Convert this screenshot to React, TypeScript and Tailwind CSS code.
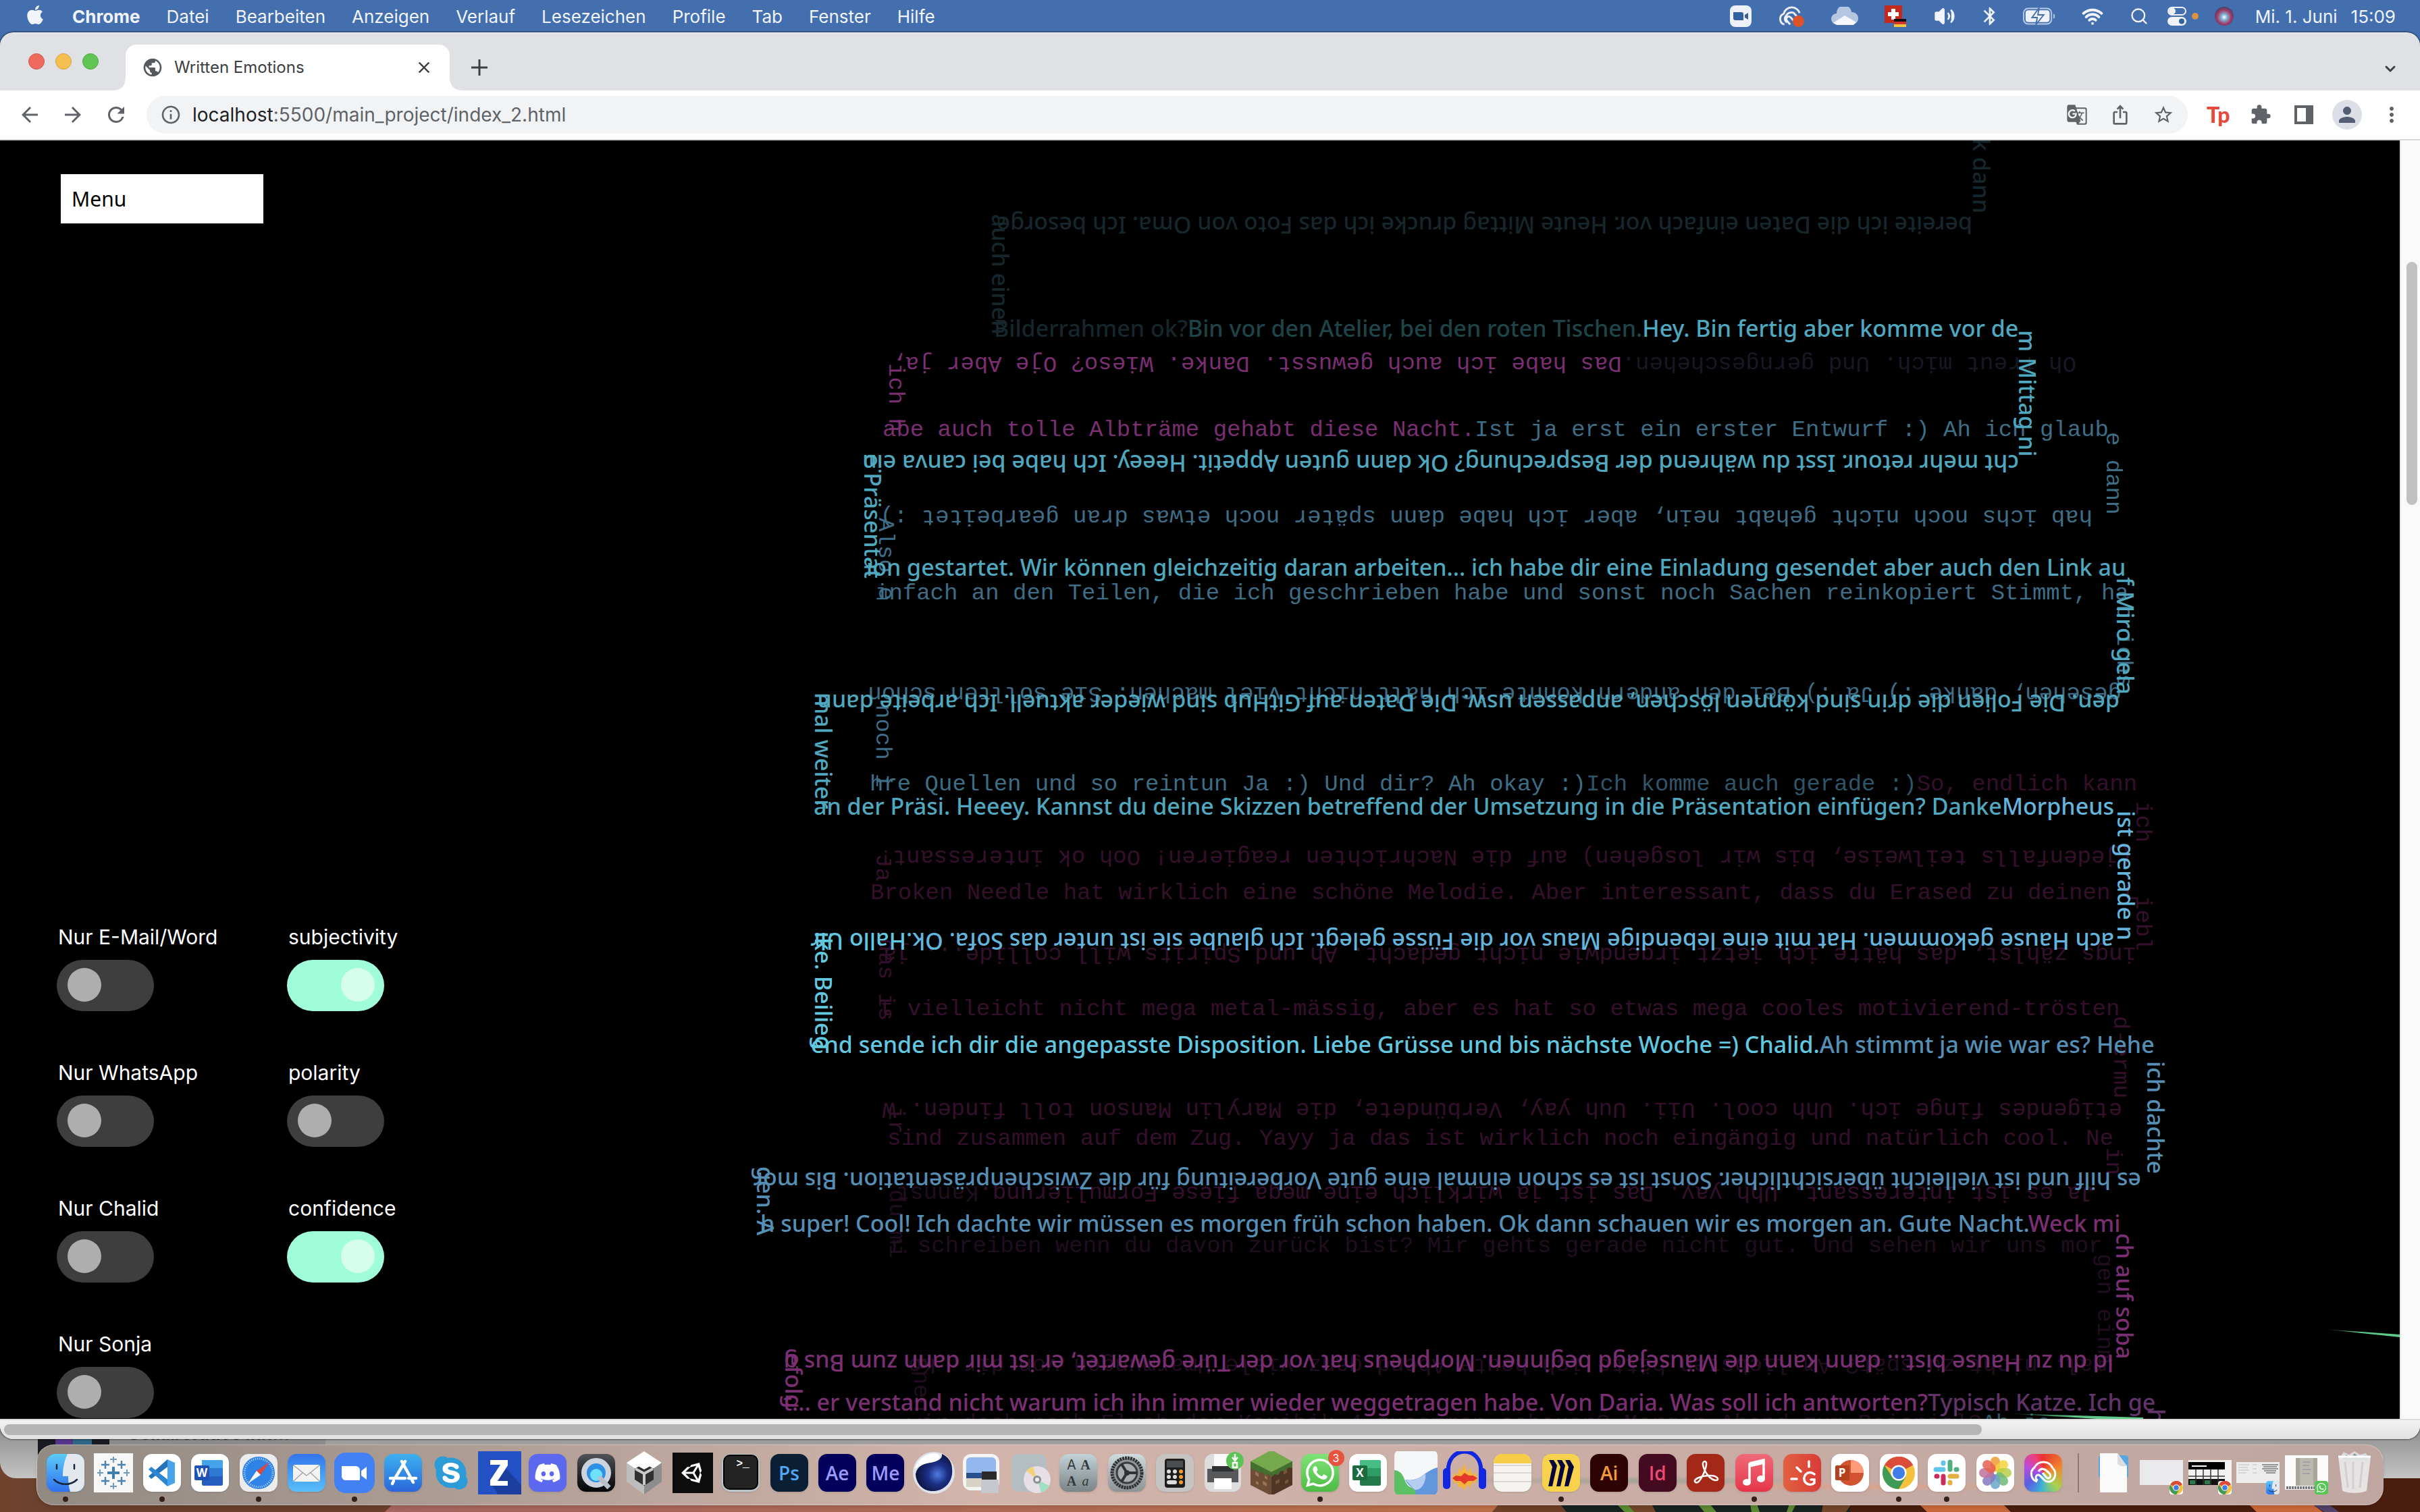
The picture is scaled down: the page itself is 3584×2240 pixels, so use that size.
import React from "react";
import { FaApple, FaDiscord, FaSkype, FaUnity, FaWhatsapp } from "react-icons/fa";
import {
  MdArrowBack,
  MdArrowForward,
  MdBluetooth,
  MdClose,
  MdExtension,
  MdGTranslate,
  MdInfoOutline,
  MdIosShare,
  MdMoreVert,
  MdOutlineRefresh,
  MdPerson,
  MdPublic,
  MdStarBorder,
} from "react-icons/md";
import { ChevronDown, Search, Volume2, Wifi } from "lucide-react";

/* ------------------------------------------------------------------ */
/* Menu bar                                                            */
/* ------------------------------------------------------------------ */

const MENUS = ["Datei", "Bearbeiten", "Anzeigen", "Verlauf", "Lesezeichen", "Profile", "Tab", "Fenster", "Hilfe"];

function MenuBar() {
  return (
    <header className="flex h-12 shrink-0 items-center justify-between bg-[#436fae] pr-9 pl-9 text-[26px] text-[#f1f4fa]">
      <nav className="flex items-center gap-[39px]">
        <button aria-label="Apple" className="pb-1">
          <FaApple className="size-8" />
        </button>
        <button className="font-bold">Chrome</button>
        {MENUS.map((m) => (
          <button key={m}>{m}</button>
        ))}
      </nav>
      <div className="flex items-center">
        <div className="flex items-center gap-[39px]">
          <svg viewBox="0 0 32 32" className="size-8">
            <rect width="32" height="32" rx="8" fill="#eef2f8" />
            <path d="M5 10h12a3 3 0 0 1 3 3v9H8a3 3 0 0 1-3-3zM22 14l5-3v10l-5-3z" fill="#33619f" />
          </svg>
          <svg viewBox="0 0 40 34" className="h-8 w-10">
            <path d="M9 30a9 9 0 0 1-1-17 13 13 0 0 1 25-1M13 27a7 7 0 0 1-1-11 9 9 0 0 1 12-4l5 6M18 30l-5-6c-3-4 2-9 6-5l7 8" fill="none" stroke="#eef2f8" strokeWidth="3" />
            <circle cx="31" cy="25" r="9" fill="#dd5228" />
          </svg>
          <svg viewBox="0 0 40 28" className="h-7 w-10">
            <path d="M8 26a8 8 0 0 1 0-16A11 11 0 0 1 30 8a9 9 0 0 1 2 18z" fill="#b5c6e0" />
            <path d="M3 24l17-11 17 10-4 4H8z" fill="#f4f7fb" />
          </svg>
          <svg viewBox="0 0 32 32" className="size-8">
            <rect width="26" height="26" fill="#c5281c" />
            <path d="M10 5h6v5h5v6h-5v5h-6v-5H5v-6h5z" fill="#fff" />
            <path d="M14 20h18v4H14z" fill="#111" />
            <path d="M14 24h18v4H14z" fill="#d0342c" />
            <path d="M14 28h18v4H14z" fill="#f3c53c" />
          </svg>
          <Volume2 className="h-8 w-9 fill-current" strokeWidth={2} />
          <MdBluetooth className="-mx-1.5 size-8" />
          <svg viewBox="0 0 50 26" className="h-7 w-12">
            <rect x="1" y="1" width="43" height="24" rx="7" fill="none" stroke="#b9cae4" strokeWidth="2" />
            <rect x="4" y="4" width="37" height="18" rx="4" fill="#eef2f8" />
            <path d="M25 0L14 15h8l-2 11 12-15h-9z" fill="#eef2f8" stroke="#436fae" strokeWidth="2" />
            <path d="M47 9v8c3-1 3-7 0-8z" fill="#b9cae4" />
          </svg>
          <Wifi className="size-8" strokeWidth={3} />
          <Search className="size-7" strokeWidth={2} />
        </div>
        <svg viewBox="0 0 28 28" className="ml-7 size-7">
          <rect x="1" y="1" width="26" height="11" rx="5.500" fill="none" stroke="#eef2f8" strokeWidth="2" />
          <circle cx="7" cy="6.500" r="5" fill="#eef2f8" />
          <rect y="15" width="28" height="13" rx="6.500" fill="#eef2f8" />
          <circle cx="21" cy="21.500" r="4" fill="#33619f" />
        </svg>
        <span className="ml-2 size-2.5 rounded-full bg-[#dc9140]" />
        <span className="ml-6 size-7 rounded-full bg-[radial-gradient(circle_at_50%_55%,#ffffff_0%,#7fb8d8_20%,#a03a68_50%,#35426b_80%)]" />
        <time className="ml-8 flex gap-5 whitespace-nowrap">
          <span>Mi. 1. Juni</span>
          <span>15:09</span>
        </time>
      </div>
    </header>
  );
}

/* ------------------------------------------------------------------ */
/* Browser chrome                                                      */
/* ------------------------------------------------------------------ */

function TabStrip() {
  return (
    <div className="flex h-[85px] shrink-0 items-end bg-[#dfe1e5]">
      <div className="flex h-full w-[186px] items-center gap-4 pb-0.5 pl-[42px]">
        <button aria-label="Schliessen" className="size-6 rounded-full border border-[#d75549] bg-[#ee6a5e]" />
        <button aria-label="Minimieren" className="size-6 rounded-full border border-[#d9a33c] bg-[#f5bf4f]" />
        <button aria-label="Vollbild" className="size-6 rounded-full border border-[#50a73f] bg-[#61c554]" />
      </div>
      <div className="relative flex h-17 w-[480px] items-center rounded-t-2xl bg-white px-6">
        <span className="absolute bottom-0 -left-4 size-4 bg-[radial-gradient(circle_at_0_0,#dfe1e5_15px,#ffffff_16px)]" />
        <span className="absolute -right-4 bottom-0 size-4 bg-[radial-gradient(circle_at_100%_0,#dfe1e5_15px,#ffffff_16px)]" />
        <MdPublic className="size-8 text-[#55585d]" />
        <span className="ml-4 flex-1 text-2xl text-[#3c4043]">Written Emotions</span>
        <button aria-label="Tab schliessen">
          <MdClose className="size-7 text-[#3c4043]" />
        </button>
      </div>
      <button aria-label="Neuer Tab" className="mb-5 ml-[30px] flex size-7 items-center justify-center">
        <svg viewBox="0 0 24 24" className="size-6">
          <path d="M12 0v24M0 12h24" stroke="#3c4043" strokeWidth="3" />
        </svg>
      </button>
      <button aria-label="Tabs durchsuchen" className="mr-8 mb-5 ml-auto">
        <ChevronDown className="size-6 text-[#3c4043]" strokeWidth={3} />
      </button>
    </div>
  );
}

function Toolbar() {
  return (
    <div className="flex h-[74px] shrink-0 items-center border-b-2 border-[#d5d7da] bg-white text-[#5f6368]">
      <div className="flex w-[217px] items-center gap-7 pl-[26px]">
        <button aria-label="Zurück"><MdArrowBack className="size-9" /></button>
        <button aria-label="Vorwärts"><MdArrowForward className="size-9" /></button>
        <button aria-label="Neu laden"><MdOutlineRefresh className="size-9" /></button>
      </div>
      <div className="flex h-14 flex-1 items-center rounded-full bg-[#f1f3f4] pr-5 pl-5">
        <MdInfoOutline className="size-8" />
        <div className="ml-4 flex-1 text-[28px]">
          <span className="text-[#202124]">localhost</span>:5500/main_project/index_2.html
        </div>
        <div className="flex items-center gap-8">
          <button aria-label="Übersetzen"><MdGTranslate className="size-8" /></button>
          <button aria-label="Teilen"><MdIosShare className="size-8" /></button>
          <button aria-label="Lesezeichen"><MdStarBorder className="size-8" /></button>
        </div>
      </div>
      <div className="flex items-center gap-8 pr-6 pl-7">
        <button className="w-8 font-[Lato] text-[32px] leading-8 font-black text-[#e4493b]">Tp</button>
        <button aria-label="Erweiterungen"><MdExtension className="size-8" /></button>
        <button aria-label="Seitenleiste">
          <svg viewBox="0 0 32 32" className="size-8"><path fillRule="evenodd" d="M2 2h28v28H2zM6 6v20h13V6z" fill="#5f6368" /></svg>
        </button>
        <button aria-label="Profil" className="-mx-1.5 flex size-11 items-center justify-center rounded-full bg-[#dcdfe5]">
          <MdPerson className="size-9 text-[#535d73]" />
        </button>
        <button aria-label="Mehr"><MdMoreVert className="size-9" /></button>
      </div>
    </div>
  );
}

/* ------------------------------------------------------------------ */
/* Text spirals                                                        */
/* ------------------------------------------------------------------ */

type Dir = "h" | "u" | "v";
type Part = [color: string, text: string];
/** x and y give the point where the baseline of the run starts. */
interface Run {
  d: Dir;
  x: number;
  y: number;
  t: Part[];
}

const AQUA = "#4fa8bf";
const DEEP = "#15262c";
const SKY = "#64b5de";
const BRIGHT = "#62c8e0";
const STEEL = "#558fb5";
const PLUM = "#7b2f73";
const SLATE = "#3f6d86";
const WINE = "#35102c";
const DUSK = "#200e20";

const SANS_RUNS: Run[] = [
  { d: "v", x: 2922, y: -3, t: [[DEEP, "k dann"]] },
  { d: "u", x: 2921, y: 113, t: [[DEEP, "bereite ich die Daten einfach vor. Heute Mittag drucke ich das Foto von Oma. Ich besorge"]] },
  { d: "v", x: 1469, y: 109, t: [[DEEP, "auch einen"]] },
  { d: "h", x: 1472, y: 291, t: [[DEEP, "Bilderrahmen ok?"], ["#1f4448", "Bin vor den Atelier, bei den roten Tischen."], [AQUA, "Hey. Bin fertig aber komme vor de"]] },
  { d: "v", x: 2990, y: 281, t: [[AQUA, "m Mittag ni"]] },
  { d: "u", x: 2990, y: 466, t: [[AQUA, "cht mehr retour. Isst du während der Besprechung? Ok dann guten Appetit. Heeey. Ich habe bei canva ein"]] },
  { d: "v", x: 1280, y: 464, t: [[AQUA, "e Präsentat"]] },
  { d: "h", x: 1283, y: 645, t: [[AQUA, "ion gestartet. Wir können gleichzeitig daran arbeiten... ich habe dir eine Einladung gesendet aber auch den Link au"]] },
  { d: "v", x: 3135, y: 647, t: [[AQUA, "f Miro gela"]] },
  { d: "u", x: 3139, y: 821, t: [[AQUA, "den. Die Folien die drin sind können löschen, anpassen usw. Die Daten auf GitHub sind wieder aktuell. Ich arbeite dann"]] },
  { d: "v", x: 1207, y: 818, t: [[AQUA, "mal weiter"]] },
  { d: "h", x: 1205, y: 999, t: [[AQUA, "an der Präsi. Heeey. Kannst du deine Skizzen betreffend der Umsetzung in die Präsentation einfügen? Danke"], [SKY, "Morpheus"]] },
  { d: "v", x: 3136, y: 993, t: [[SKY, "ist gerade n"]] },
  { d: "u", x: 3131, y: 1174, t: [[SKY, "ach Hause gekommen. Hat mit eine lebendige Maus vor die Füsse gelegt. Ich glaube sie ist unter das Sofa. Ok."], [BRIGHT, "Hallo Ulr"]] },
  { d: "v", x: 1207, y: 1172, t: [[BRIGHT, "ike. Beilieg"]] },
  { d: "h", x: 1201, y: 1352, t: [[BRIGHT, "end sende ich dir die angepasste Disposition. Liebe Grüsse und bis nächste Woche =) Chalid."], [STEEL, "Ah stimmt ja wie war es? Hehe"]] },
  { d: "v", x: 3180, y: 1364, t: [[STEEL, "ich dachte"]] },
  { d: "u", x: 3171, y: 1529, t: [[STEEL, "es hilf und ist vielleicht übersichtlicher. Sonst ist es schon einmal eine gute Vorbereitung für die Zwischenpräsentation. Bis mor"]] },
  { d: "v", x: 1121, y: 1520, t: [[STEEL, "gen. A"]] },
  { d: "h", x: 1126, y: 1617, t: [[STEEL, "h super! Cool! Ich dachte wir müssen es morgen früh schon haben. Ok dann schauen wir es morgen an. Gute Nacht."], [PLUM, "Weck mi"]] },
  { d: "v", x: 3134, y: 1619, t: [[PLUM, "ch auf soba"]] },
  { d: "u", x: 3130, y: 1799, t: [[PLUM, "ld du zu Hause bist... dann kann die Mäusejagd beginnen. Morpheus hat vor der Türe gewartet, er ist mir dann zum Bus g"]] },
  { d: "v", x: 1163, y: 1796, t: [[PLUM, "efolg"]] },
  { d: "h", x: 1160, y: 1882, t: [[PLUM, "t... er verstand nicht warum ich ihn immer wieder weggetragen habe. Von Daria. Was soll ich antworten?"], ["#603468", "Typisch Katze. Ich ge"]] },
  { d: "v", x: 3181, y: 1879, t: [["#603468", "h"]] },
];

const MONO_RUNS: Run[] = [
  { d: "u", x: 3075, y: 321, t: [["#181825", "Oh freut mich. Und gerngeschehen."], [PLUM, "Das habe ich auch gewusst. Danke. Wieso? Oje Aber ja,"]] },
  { d: "v", x: 1317, y: 330, t: [[PLUM, "ich h"]] },
  { d: "h", x: 1307, y: 438, t: [[PLUM, "abe auch tolle Albträme gehabt diese Nacht."], [SLATE, "Ist ja erst ein erster Entwurf :) Ah ich glaub"]] },
  { d: "v", x: 3120, y: 432, t: [[SLATE, "e dann"]] },
  { d: "u", x: 3099, y: 548, t: [[SLATE, "hab ichs noch nicht gehabt nein, aber ich habe dann später noch etwas dran gearbeitet :)"]] },
  { d: "v", x: 1302, y: 559, t: [[SLATE, "Also e"]] },
  { d: "h", x: 1296, y: 680, t: [[SLATE, "infach an den Teilen, die ich geschrieben habe und sonst noch Sachen reinkopiert Stimmt, ha"]] },
  { d: "v", x: 3136, y: 688, t: [[SLATE, "b ichs"]] },
  { d: "u", x: 3142, y: 810, t: [[SLATE, "gesehen, danke :) Ja :) Bei den andern könnte ich halt nicht viel machen. Sie sollten schon"]] },
  { d: "v", x: 1298, y: 836, t: [[SLATE, "noch i"]] },
  { d: "h", x: 1288, y: 963, t: [[SLATE, "hre Quellen und so reintun Ja :) Und dir? Ah okay :)"], ["#305468", "Ich komme auch gerade :)"], [WINE, "So, endlich kann"]] },
  { d: "v", x: 3164, y: 979, t: [[WINE, "ich"]] },
  { d: "u", x: 3158, y: 1052, t: [[WINE, "(jedenfalls teilweise, bis wir losgehen) auf die Nachrichten reagieren! Ooh ok interessant!"]] },
  { d: "v", x: 1298, y: 1057, t: [[WINE, "Ja"]] },
  { d: "h", x: 1289, y: 1124, t: [[WINE, "Broken Needle hat wirklich eine schöne Melodie. Aber interessant, dass du Erased zu deinen L"]] },
  { d: "v", x: 3164, y: 1119, t: [[WINE, "iebl"]] },
  { d: "u", x: 3164, y: 1196, t: [[WINE, "ings zählst, das hätte ich jetzt irgendwie nicht gedacht. Ah und Spirits will collide... ja"]] },
  { d: "v", x: 1302, y: 1182, t: [[WINE, "das is"]] },
  { d: "h", x: 1303, y: 1296, t: [[WINE, "t vielleicht nicht mega metal-mässig, aber es hat so etwas mega cooles motivierend-trösten"]] },
  { d: "v", x: 3131, y: 1297, t: [[WINE, "d-ermu"]] },
  { d: "u", x: 3143, y: 1426, t: [[WINE, "etigendes finge ich. Uhh cool. Uii. Uuh yay, Verbündete, die Marylin Manson toll finden. W"]] },
  { d: "v", x: 1317, y: 1431, t: [[WINE, "ir"]] },
  { d: "h", x: 1314, y: 1488, t: [[WINE, "sind zusammen auf dem Zug. Yayy ja das ist wirklich noch eingängig und natürlich cool. Ne"]] },
  { d: "v", x: 3120, y: 1492, t: [[WINE, "in"]] },
  { d: "u", x: 3102, y: 1550, t: [[WINE, "Ja es ist interessant. Uhh yay. Das ist ja wirklich eine mega fiese Formulierung."], [DUSK, "Kannst"]] },
  { d: "v", x: 1318, y: 1554, t: [[DUSK, "du mi"]] },
  { d: "h", x: 1318, y: 1647, t: [[DUSK, "r schreiben wenn du davon zurück bist? Mir gehts gerade nicht gut. Und sehen wir uns mor"]] },
  { d: "v", x: 3107, y: 1649, t: [[DUSK, "gen einm"]] },
  { d: "u", x: 3120, y: 1805, t: [[DUSK, "mal, nicht zu spät? Am liebsten hätte ich heute Abend ganz viele Umarmungen von dir. Kö"]] },
  { d: "v", x: 1354, y: 1802, t: [[DUSK, "nnen"]] },
  { d: "h", x: 1344, y: 1910, t: [[DUSK, "wir doch noch Fluch der Karibik 4 zusammen schauen? Morgen Abend zum Beispiel?"], ["#2b5560", "Ah ja"]] },
];

const TURN: Record<Dir, string> = { h: "rotate-0", u: "rotate-180", v: "rotate-90" };

function place({ d, x, y }: Run, ascent: number) {
  if (d === "h") return { left: x, top: y - ascent };
  if (d === "u") return { left: x, top: y + ascent };
  return { left: x + ascent, top: y };
}

function Spiral({ runs, ascent, className }: { runs: Run[]; ascent: number; className: string }) {
  return (
    <div className={`absolute inset-0 ${className}`}>
      {runs.map((run, i) => (
        <p key={i} className={`absolute origin-top-left leading-10 whitespace-pre ${TURN[run.d]}`} style={place(run, ascent)}>
          {run.t.map(([color, text]) => (
            <span key={text} style={{ color }}>{text}</span>
          ))}
        </p>
      ))}
    </div>
  );
}

/* ------------------------------------------------------------------ */
/* Page                                                                */
/* ------------------------------------------------------------------ */

function Toggle({ label, on = false }: { label: string; on?: boolean }) {
  return (
    <label className="flex h-[201px] flex-col text-[30px] leading-9 text-white">
      <span className="mb-4 pl-0.5">{label}</span>
      <span className="relative h-19 w-36">
        <input type="checkbox" role="switch" defaultChecked={on} className="peer size-full appearance-none rounded-full bg-[#3e3e3e] checked:bg-[#a0fdd9]" />
        <span className="pointer-events-none absolute top-3 left-4 size-[50px] rounded-full bg-[#aeaeae] peer-checked:left-20 peer-checked:bg-[#d6fdee]" />
      </span>
    </label>
  );
}

function Page() {
  return (
    <main className="relative flex flex-1 flex-col justify-between overflow-hidden bg-black">
      <Spiral runs={MONO_RUNS} ascent={29} className="font-['Liberation_Mono',monospace] text-[34px]" />
      <Spiral runs={SANS_RUNS} ascent={33} className="font-['Noto_Sans',sans-serif] text-[34px] font-medium" />
      <svg viewBox="0 0 600 140" className="absolute right-0 bottom-0 h-35 w-150">
        <defs>
          <linearGradient id="ray"><stop offset="0" stopColor="#5fc98a" stopOpacity="0" /><stop offset="0.5" stopColor="#5fc98a" /></linearGradient>
        </defs>
        <path d="M486 7L600 15V19z" fill="url(#ray)" />
        <path d="M16 132L220 138V144z" fill="url(#ray)" />
      </svg>
      <button className="relative mt-[50px] ml-[90px] h-[73px] w-75 bg-white pl-4 text-left font-['Noto_Sans',sans-serif] text-[30px] text-black">
        Menu
      </button>
      <div className="relative -mb-[72px] ml-21 grid grid-cols-[341px_auto] justify-start">
        <div>
          <Toggle label="Nur E-Mail/Word" />
          <Toggle label="Nur WhatsApp" />
          <Toggle label="Nur Chalid" />
          <Toggle label="Nur Sonja" />
        </div>
        <div>
          <Toggle label="subjectivity" on />
          <Toggle label="polarity" />
          <Toggle label="confidence" on />
        </div>
      </div>
    </main>
  );
}

function Browser() {
  return (
    <section className="relative z-10 flex min-h-0 flex-1 flex-col overflow-hidden rounded-[20px] border-t border-white/70 bg-[#efefef] shadow-[0_0_3px_#000]">
      <TabStrip />
      <Toolbar />
      <div className="flex min-h-0 flex-1">
        <Page />
        <div className="w-[30px] shrink-0 border-l-2 border-[#e6e6e6] bg-[#fafafa] px-2 pt-[180px]">
          <div className="h-[360px] w-4 rounded-full bg-[#c1c1c1]" />
        </div>
      </div>
      <div className="h-[30px] shrink-0 border-t-2 border-[#dcdcdc] bg-linear-to-b from-[#f2f2f2] to-[#e0e0e0] px-1.5 pt-1.5">
        <div className="h-4 w-[82%] rounded-full bg-[#b4b4b4]" />
      </div>
    </section>
  );
}

/* ------------------------------------------------------------------ */
/* Dock                                                                */
/* ------------------------------------------------------------------ */

function Art({ children }: { children: React.ReactNode }) {
  return <svg viewBox="0 0 64 64" className="size-16">{children}</svg>;
}

function Tile({ bg, children }: { bg: string; children?: React.ReactNode }) {
  return <span className={`flex size-14 items-center justify-center overflow-hidden rounded-[13px] shadow-sm ${bg}`}>{children}</span>;
}

function ChromeLogo() {
  return (
    <svg viewBox="0 0 50 50" className="size-full">
      <circle cx="25" cy="25" r="25" fill="#f5c13c" />
      <path d="M25 25L3 13A25 25 0 0 1 47 13z" fill="#dd4b3b" />
      <path d="M3 13A25 25 0 0 0 25 50l11-19-22-1z" fill="#3f9a55" />
      <path d="M25 13H47A25 25 0 0 0 25 0z" fill="#dd4b3b" />
      <circle cx="25" cy="25" r="12" fill="#fff" />
      <circle cx="25" cy="25" r="9.500" fill="#3f7de8" />
    </svg>
  );
}

function FinderFace() {
  return (
    <svg viewBox="0 0 56 56" className="size-full">
      <defs><linearGradient id="fin" x2="0" y2="1"><stop stopColor="#5ccbf8" /><stop offset="1" stopColor="#3070ee" /></linearGradient></defs>
      <path d="M0 0h56v56H0z" fill="url(#fin)" />
      <path d="M31 0c-5 10-7 22-7 33h8c0 9 1 17 3 23h21V0z" fill="#e3e8ef" />
      <path d="M15 16v6M41 16v6M11 38c9 9 25 9 34 0" stroke="#16263d" strokeWidth="2.500" fill="none" strokeLinecap="round" />
    </svg>
  );
}

interface App {
  name: string;
  icon: React.ReactNode;
  running?: boolean;
}

const adobe = (bg: string, fg: string, text: string) => (
  <Tile bg={bg}><span className={`font-['Open_Sans',sans-serif] text-[28px] font-semibold ${fg}`}>{text}</span></Tile>
);

const office = (letter: string, base: string, mid: string, light: string) => (
  <Tile bg="bg-white">
    <svg viewBox="0 0 56 56" className="size-full">
      <rect x="16" y="9" width="31" height="38" rx="3" fill={mid} />
      <path d="M16 9h28a3 3 0 0 1 3 3v9H16z" fill={light} />
      <path d="M16 33h31v11a3 3 0 0 1-3 3H19a3 3 0 0 1-3-3z" fill={base} opacity="0.7" />
      <rect x="5" y="17" width="22" height="22" rx="2" fill={base} />
      <text x="16" y="34" textAnchor="middle" fontFamily="Open Sans" fontWeight="700" fontSize="17" fill="#fff">{letter}</text>
    </svg>
  </Tile>
);

const PETALS = ["#f09a35", "#f3d43f", "#b6cf4a", "#6fb978", "#6aa5c9", "#8579c0", "#c1719c", "#e5604d"];

const APPS: App[] = [
  { name: "Finder", running: true, icon: <Tile bg="bg-sky-400"><FinderFace /></Tile> },
  {
    name: "Tableau",
    icon: (
      <Art>
        <path d="M3 3h58v58H3z" fill="#f7f7f7" />
        <path d="M32 23v18M23 32h18" stroke="#3f7fae" strokeWidth="4" />
        <path d="M20 14v12M14 20h12M44 14v12M38 20h12M20 38v12M14 44h12M44 38v12M38 44h12" stroke="#4d83ae" strokeWidth="2.500" />
        <path d="M32 8v9M27 12h10M32 47v9M27 52h10M12 27v10M8 32h9M52 27v10M47 32h9" stroke="#6d9cc0" strokeWidth="2" />
      </Art>
    ),
  },
  {
    name: "Code",
    running: true,
    icon: (
      <Tile bg="bg-white">
        <svg viewBox="0 0 56 56" className="size-full">
          <path d="M36 8L8 33l4 4 27-20z" fill="#2273b9" />
          <path d="M8 23l4-4 27 21-3 8z" fill="#2b87d1" />
          <path d="M36 8l11 5v30l-11 5z" fill="#46a3ec" />
        </svg>
      </Tile>
    ),
  },
  { name: "Word", icon: office("W", "#1f52b5", "#2f79d2", "#45a3ea") },
  {
    name: "Safari",
    running: true,
    icon: (
      <Tile bg="bg-[#ececec]">
        <svg viewBox="0 0 56 56" className="size-full">
          <circle cx="28" cy="28" r="24" fill="#2f83e6" />
          <circle cx="28" cy="28" r="21" fill="none" stroke="#bcdcff" strokeWidth="3" strokeDasharray="1 2" />
          <path d="M44 12L31 31l-6-6z" fill="#e2453b" />
          <path d="M12 44l13-19 6 6z" fill="#f6f6f6" />
        </svg>
      </Tile>
    ),
  },
  {
    name: "Mail",
    icon: (
      <Tile bg="bg-linear-to-b from-[#3574ea] to-[#5ac0fa]">
        <svg viewBox="0 0 56 56" className="size-full">
          <rect x="8" y="16" width="40" height="25" rx="3" fill="#f3f3f3" />
          <path d="M9 17l19 15 19-15M9 40l13-12M47 40L34 28" fill="none" stroke="#a9a9a9" strokeWidth="1.500" />
        </svg>
      </Tile>
    ),
  },
  {
    name: "Zoom",
    running: true,
    icon: (
      <Art>
        <rect x="2" y="2" width="60" height="60" rx="17" fill="#4181f4" />
        <path d="M13 22h21a6 6 0 0 1 6 6v15H19a6 6 0 0 1-6-6zM42 29l8-6v19l-8-6z" fill="#fff" />
      </Art>
    ),
  },
  {
    name: "App Store",
    icon: (
      <Tile bg="bg-linear-to-b from-[#3fb0ef] to-[#2c66da]">
        <svg viewBox="0 0 56 56" className="size-full">
          <path d="M31 11L16 36M26 11l17 31M9 36h22M36 36h11M14 40l-2 4" stroke="#fff" strokeWidth="4.500" strokeLinecap="round" />
        </svg>
      </Tile>
    ),
  },
  { name: "Skype", icon: <FaSkype className="size-14 rounded-2xl text-[#2c9bd8] [background:radial-gradient(#fff_50%,transparent_52%)]" /> },
  {
    name: "Zotero",
    icon: (
      <Art>
        <rect y="-1" width="64" height="66" rx="3" fill="#2350c4" />
        <path d="M42 26l22 24v15H30l-9-15z" fill="#1c3f9f" />
        <path d="M18 13h26v8L29 44h15v7H18v-8l15-23H18z" fill="#fff" />
      </Art>
    ),
  },
  { name: "Discord", icon: <Tile bg="bg-[#5c68ee]"><FaDiscord className="size-10 text-white" /></Tile> },
  {
    name: "QuickTime",
    icon: (
      <Tile bg="bg-linear-to-b from-[#505458] to-[#050607]">
        <svg viewBox="0 0 56 56" className="size-full">
          <circle cx="28" cy="28" r="18" fill="#2f8fe6" stroke="#ccd3dd" strokeWidth="8" />
          <circle cx="28" cy="31" r="9" fill="#6fe0fb" />
          <path d="M32 34l15 16" stroke="#b8bfc9" strokeWidth="7" />
        </svg>
      </Tile>
    ),
  },
  {
    name: "Unity Hub",
    icon: (
      <Art>
        <path d="M32 0l26 17v28L32 64z" fill="#8d8d8d" />
        <path d="M32 0L6 17v28l26 19z" fill="#bdbdbd" />
        <path d="M32 0l26 17-13 9-13-9-13 9L6 17z" fill="#fff" />
        <path d="M32 18l14 8v16l-14 9-14-9V26z" fill="#303030" />
        <path d="M32 27l9-5v-4l-9-6-9 6v4z" fill="#fff" />
        <path d="M32 33v17M32 33l-13-7M32 33l13-7" stroke="#c9c9c9" strokeWidth="4" />
      </Art>
    ),
  },
  { name: "Unity", icon: <span className="flex size-15 items-center justify-center bg-[#0c0c0c]"><FaUnity className="size-9 text-white" /></span> },
  {
    name: "Terminal",
    icon: (
      <Tile bg="bg-[#b9c6cb]">
        <span className="mb-0.5 size-13 rounded-[10px] border-2 border-black bg-[#232323] pl-1.5 font-['Liberation_Mono',monospace] text-base font-bold text-white">&gt;_</span>
      </Tile>
    ),
  },
  { name: "Photoshop", icon: adobe("bg-[#0a1f33]", "text-[#4fa8f6]", "Ps") },
  { name: "After Effects", icon: adobe("bg-[#02005a]", "text-[#9b9afa]", "Ae") },
  { name: "Media Encoder", icon: adobe("bg-[#02005a]", "text-[#9b9afa]", "Me") },
  {
    name: "Cinema 4D",
    icon: (
      <Art>
        <defs><radialGradient id="orb" cx="0.6" cy="0.55" r="0.6"><stop stopColor="#4f7be0" /><stop offset="0.450" stopColor="#1c2f86" /><stop offset="1" stopColor="#0a1238" /></radialGradient></defs>
        <circle cx="32" cy="32" r="31" fill="#dfe3ec" />
        <path d="M44 4c9 4 15 12 15 22 2 18-10 32-27 33C17 60 6 49 5 34c2-12 12-16 22-17C37 15 45 12 44 4z" fill="url(#orb)" />
        <path d="M4 26C9 10 22 3 34 3c6 1 8 5 6 8-6 8-20 3-36 15z" fill="#fff" />
      </Art>
    ),
  },
  {
    name: "Vorschau",
    icon: (
      <Art>
        <rect x="4" y="4" width="54" height="54" rx="12" fill="#f4f4f4" />
        <rect x="9" y="9" width="44" height="44" rx="6" fill="#93b8ee" />
        <path d="M9 32h44v8H9z" fill="#28508f" />
        <path d="M9 40h44v13H9z" fill="#d9d2c6" />
        <path d="M32 30h22v14H32z" fill="#2a2a2a" />
        <path d="M31 42h26v20H31z" fill="#c5c9cf" />
      </Art>
    ),
  },
  {
    name: "DVD Player",
    icon: (
      <Art>
        <rect x="4" y="4" width="52" height="56" rx="10" fill="#b4bec2" />
        <circle cx="42" cy="42" r="20" fill="#e7dfe6" />
        <path d="M42 42L26 29a20 20 0 0 1 10-6z" fill="#f3d27c" />
        <path d="M42 42l18 9a20 20 0 0 1-12 10z" fill="#9fe0c4" />
        <circle cx="42" cy="42" r="6" fill="#8a8f94" />
        <circle cx="42" cy="42" r="3" fill="#eee" />
      </Art>
    ),
  },
  {
    name: "Schriftsammlung",
    icon: (
      <Tile bg="bg-linear-to-b from-[#c3d3d8] to-[#7b8486]">
        <span className="grid grid-cols-2 gap-x-1.5 font-['Liberation_Serif',serif] text-xl leading-6 text-[#34393b]">
          <span className="font-['Inter',sans-serif]">A</span><b>A</b><b>A</b><i>a</i>
        </span>
      </Tile>
    ),
  },
  {
    name: "Einstellungen",
    icon: (
      <Tile bg="bg-linear-to-b from-[#cfdbde] to-[#8d9293]">
        <svg viewBox="0 0 56 56" className="size-full">
          <circle cx="28" cy="28" r="22" fill="#8f9394" stroke="#2f3233" strokeWidth="5" strokeDasharray="3 1" />
          <circle cx="28" cy="28" r="15" fill="#a8acad" stroke="#3a3d3e" strokeWidth="3" />
          <path d="M28 28h15M28 28l-8-13M28 28l-8 13" stroke="#2f3233" strokeWidth="4" />
          <circle cx="28" cy="28" r="4" fill="#2f3233" />
        </svg>
      </Tile>
    ),
  },
  {
    name: "Rechner",
    icon: (
      <Tile bg="bg-[#c6c4c2]">
        <svg viewBox="0 0 56 56" className="size-full">
          <rect x="13" y="7" width="30" height="43" rx="4" fill="#1d1d1d" />
          <rect x="16" y="10" width="24" height="10" fill="#4a4d50" />
          {[26, 34].map((y) => (
            <g key={y}>
              <circle cx="19" cy={y} r="3" fill="#ddd" /><circle cx="28" cy={y} r="3" fill="#ddd" /><circle cx="37" cy={y} r="3" fill="#f19a37" />
            </g>
          ))}
          <rect x="16" y="39" width="15" height="6" rx="3" fill="#ddd" />
          <circle cx="37" cy="42" r="3" fill="#f19a37" />
        </svg>
      </Tile>
    ),
  },
  {
    name: "Drucker",
    icon: (
      <Art>
        <rect x="4" y="4" width="54" height="56" rx="12" fill="#dcdcdc" />
        <path d="M18 4h26v22H18z" fill="#fafafa" />
        <path d="M8 26h46v20H8z" fill="#56585a" />
        <path d="M15 22h32v8H15z" fill="#2e3031" />
        <path d="M18 40h26v16H18z" fill="#fff" />
        <circle cx="49" cy="14" r="13" fill="#5bc455" />
        <path d="M49 4v9M45 9l4 5 4-5M46 17h6v7h-6z" stroke="#fff" strokeWidth="2.500" fill="none" />
      </Art>
    ),
  },
  {
    name: "Minecraft",
    icon: (
      <Art>
        <path d="M32-2l31 17-31 16L1 15z" fill="#75a94c" />
        <path d="M1 15l31 16v35L1 50z" fill="#6e4d36" />
        <path d="M63 15L32 31v35l31-16z" fill="#4f3625" />
        <path d="M1 15l31 16v7l-5-5-4 3-5-6-5 2-5-5-4 1-3-4zM63 15L32 31v7l5-4 5 1 4-6 6 1 5-6 6 1z" fill="#44702f" />
        <path d="M8 30l5 3v5l-5-3zM19 44l6 3v5l-6-3zM9 44l4 2v4l-4-2zM22 36l4 2v4l-4-2z" fill="#9a7455" />
        <path d="M38 44l6-3v5l-6 3zM50 30l5-3v5l-5 3zM52 44l5-3v5l-5 3z" fill="#76543b" />
      </Art>
    ),
  },
  {
    name: "WhatsApp",
    running: true,
    icon: (
      <span className="relative">
        <Tile bg="bg-linear-to-b from-[#7fe477] to-[#4cbb44]"><FaWhatsapp className="size-12 text-white" /></Tile>
        <span className="absolute -top-1.5 -right-2 flex size-6 items-center justify-center rounded-full bg-[#e8533f] text-base text-white">3</span>
      </span>
    ),
  },
  { name: "Excel", icon: office("X", "#1b6b3e", "#2f9c63", "#46bd84") },
  {
    name: "Karten",
    icon: (
      <Art>
        <rect y="-1" width="64" height="66" rx="7" fill="#f4f6f8" />
        <path d="M0 28c18 2 12 22 26 26l16 11H7a7 7 0 0 1-7-7z" fill="#5dbf63" />
        <path d="M16 42c24 4 26-12 48-18v34a7 7 0 0 1-7 7H32c0-12-10-10-16-23z" fill="#6396dc" />
        <path d="M16 42c14 3 20-2 30-9 2 12-6 26-16 24z" fill="#b4cdf0" />
      </Art>
    ),
  },
  {
    name: "Audacity",
    icon: (
      <Art>
        <path d="M8 32C4-10 60-10 56 32" fill="none" stroke="#1228e0" strokeWidth="6" />
        <path d="M14 40l4-9 3 6 3-14 3 8 5-13 4 15 4-9 4 12 3-5 4 9-4 9-3-5-4 11-4-7-4 10-5-7-3 5-3-12-3 5z" fill="#f5b437" />
        <path d="M14 40l5-4 8 1 5-5 6 4 7 0 6 4-6 4-8 0-5 5-6-5-7 0z" fill="#e4382a" />
        <rect y="25" width="11" height="31" rx="5" fill="#1228e0" /><rect x="53" y="25" width="11" height="31" rx="5" fill="#1228e0" />
      </Art>
    ),
  },
  {
    name: "Notizen",
    icon: (
      <Tile bg="bg-[#f4f3f0]">
        <svg viewBox="0 0 56 56" className="size-full"><path d="M0 0h56v14H0z" fill="#f7cc46" /><path d="M0 17h56M0 28h56M0 41h56" stroke="#cfcdc9" strokeWidth="1.500" /></svg>
      </Tile>
    ),
  },
  {
    name: "Miro",
    running: true,
    icon: (
      <Tile bg="bg-[#f8d24c]">
        <svg viewBox="0 0 56 56" className="size-full"><path d="M10 9h7l5 8-7 31H9l6-29zM22 9h7l5 8-7 31h-6l6-29zM34 9h7l6 10-8 29h-6l6-29z" fill="#06053c" /></svg>
      </Tile>
    ),
  },
  { name: "Illustrator", icon: adobe("bg-[#2e0402]", "text-[#f29b38]", "Ai") },
  { name: "InDesign", icon: adobe("bg-[#430a20]", "text-[#ec4a72]", "Id") },
  {
    name: "Acrobat",
    icon: (
      <Tile bg="bg-[#a42818]">
        <svg viewBox="0 0 56 56" className="size-full"><path d="M13 42c-5-4 8-10 22-10 12 0 14 8 7 7-8-2-16-12-18-23-1-6 6-7 5 0-1 8-10 30-16 26z" fill="none" stroke="#fff" strokeWidth="2.500" /></svg>
      </Tile>
    ),
  },
  {
    name: "Musik",
    running: true,
    icon: (
      <Tile bg="bg-linear-to-b from-[#ef6a78] to-[#e5334a]">
        <svg viewBox="0 0 56 56" className="size-full">
          <path d="M21 14l21-5v29M21 14v29" fill="none" stroke="#fff" strokeWidth="3.500" /><path d="M20 13l22-5v7l-22 5z" fill="#fff" />
          <ellipse cx="17" cy="42" rx="6" ry="5" fill="#fff" /><ellipse cx="38" cy="37" rx="6" ry="5" fill="#fff" />
        </svg>
      </Tile>
    ),
  },
  {
    name: "Camo",
    icon: (
      <Tile bg="bg-linear-to-r from-[#e2603f] to-[#d93a37]">
        <svg viewBox="0 0 56 56" className="size-full"><path d="M46 30a9 9 0 1 0 0 13v-5h-5M38 11v8M12 37h8M20 20l6 6" fill="none" stroke="#fff" strokeWidth="3.500" strokeLinecap="round" /></svg>
      </Tile>
    ),
  },
  {
    name: "PowerPoint",
    icon: (
      <Tile bg="bg-white">
        <svg viewBox="0 0 56 56" className="size-full">
          <circle cx="29" cy="28" r="19" fill="#d35230" /><path d="M29 9a19 19 0 0 1 19 19H29z" fill="#ff9b78" />
          <rect x="6" y="17" width="21" height="22" rx="2" fill="#b3401f" />
          <text x="16" y="34" textAnchor="middle" fontFamily="Open Sans" fontWeight="700" fontSize="17" fill="#fff">P</text>
        </svg>
      </Tile>
    ),
  },
  { name: "Chrome", running: true, icon: <Tile bg="bg-white"><span className="size-12"><ChromeLogo /></span></Tile> },
  {
    name: "Slack",
    running: true,
    icon: (
      <Tile bg="bg-white">
        <svg viewBox="0 0 56 56" className="size-full" strokeWidth="7" strokeLinecap="round">
          <path d="M23 13v1M12 23h11" stroke="#5fc5ec" /><path d="M33 12v11M43 23h-1" stroke="#50ae80" />
          <path d="M33 33h10M33 43v-1" stroke="#e0b13f" /><path d="M23 33v10M13 33h1" stroke="#cb2d5c" />
        </svg>
      </Tile>
    ),
  },
  {
    name: "Fotos",
    icon: (
      <Tile bg="bg-white">
        <svg viewBox="0 0 56 56" className="size-full">
          {PETALS.map((c, i) => (
            <rect key={c} x="21" y="4" width="14" height="22" rx="7" fill={c} opacity="0.85" transform={`rotate(${i * 45} 28 28)`} />
          ))}
        </svg>
      </Tile>
    ),
  },
  {
    name: "Creative Cloud",
    icon: (
      <Tile bg="bg-[conic-gradient(#e9332f,#f0872e_20%,#a5d34f_38%,#3bb3d8_52%,#5b5fe0_65%,#b64be0_80%,#ef3f7d_92%,#e9332f)]">
        <svg viewBox="0 0 56 56" className="size-full">
          <path d="M19 41a12 12 0 0 1-4-21 15 15 0 0 1 27 1 12 12 0 0 1-4 20c-8 1-9-4-15-9-5-4-9 5-3 7M21 26c5-8 12-2 17 4 3 5-3 8-6 4l-5-6" fill="none" stroke="#fff" strokeWidth="3" />
        </svg>
      </Tile>
    ),
  },
];

function Thumb({ children, badge }: { children: React.ReactNode; badge: React.ReactNode }) {
  return (
    <span className="relative flex size-16 items-center">
      <svg viewBox="0 0 64 64" className="size-16">{children}</svg>
      <span className="absolute right-0 bottom-0 size-5 overflow-hidden rounded bg-white">{badge}</span>
    </span>
  );
}

const STACKS: App[] = [
  {
    name: "Dokumente",
    icon: (
      <Art>
        <rect x="10" y="6" width="44" height="34" rx="4" fill="#5aa7e0" />
        <path d="M12 3h26l14 19v39H12z" fill="#fafafa" /><path d="M38 3l14 19c-6 1-12 0-14-4z" fill="#dcdcdc" />
      </Art>
    ),
  },
  { name: "Fenster 1", icon: <Thumb badge={<ChromeLogo />}><path d="M0 13h64v37H0z" fill="#eaeaec" /></Thumb> },
  {
    name: "Fenster 2",
    icon: (
      <Thumb badge={<ChromeLogo />}>
        <path d="M0 13h64v37H0z" fill="#f1f1f1" /><path d="M0 16h54v11H0z" fill="#000" /><path d="M0 41h54v9H0z" fill="#111" />
        <path d="M11 27v23M22 27v23M33 27v23M44 27v23M0 37h54" stroke="#333" strokeWidth="1.500" />
        <path d="M2 43h8v6H2zM24 43h8v6h-8z" fill="#2d7a4f" /><path d="M5 22h22" stroke="#fff" strokeWidth="2" />
      </Thumb>
    ),
  },
  {
    name: "Fenster 3",
    icon: (
      <Thumb badge={<FinderFace />}>
        <path d="M0 16h64v31H0z" fill="#ececec" /><path d="M3 20h16M3 24h14M3 28h16M3 32h12M24 20h6M24 26h6M24 32h6" stroke="#c3bcbc" />
        <path d="M38 20h24M40 23h20M38 26h24M41 29h18M44 32h14" stroke="#777" strokeWidth="1.500" />
      </Thumb>
    ),
  },
  {
    name: "Fenster 4",
    icon: (
      <Thumb badge={<span className="flex size-full items-center justify-center bg-[#55c653]"><FaWhatsapp className="size-4 text-white" /></span>}>
        <path d="M0 6h64v51H0z" fill="#fbfbfb" /><path d="M16 10h32v41H16z" fill="#a9a69b" /><path d="M22 10h20v41H22z" fill="#bcb9b0" />
        <path d="M26 16h12M26 21h10M26 27h12M26 33h11" stroke="#8a8a9c" /><path d="M2 54h44" stroke="#777" strokeWidth="4" strokeDasharray="3 1" />
      </Thumb>
    ),
  },
  {
    name: "Papierkorb",
    icon: (
      <Art>
        <path d="M9 12L16 1l8 4 8-5 8 5 9-2 6 10z" fill="#d8dadd" /><path d="M14 12l6-7 6 6 6-8 8 8 8-5 5 7z" fill="#6a6e74" opacity="0.7" />
        <path d="M8 8h48l-6 50c-4 5-32 5-36 0z" fill="#eceded" opacity="0.85" /><path d="M8 8h48" stroke="#fff" strokeWidth="3" />
        <path d="M18 16l4 38M30 16v40M44 16l-4 38" stroke="#cfcfcf" strokeWidth="3" />
      </Art>
    ),
  },
];

function DockItem({ app }: { app: App }) {
  return (
    <button aria-label={app.name} className="relative flex h-full flex-1 items-center justify-center">
      {app.icon}
      {app.running && <span className="absolute -bottom-0.5 left-1/2 -ml-1 size-2 rounded-full bg-[#33201a]" />}
    </button>
  );
}

function Desktop() {
  return (
    <svg viewBox="0 0 3584 130" preserveAspectRatio="none" className="absolute inset-x-0 bottom-0 h-[130px] w-full">
      <defs>
        <linearGradient id="wood"><stop stopColor="#6f432e" /><stop offset="0.160" stopColor="#6b412d" /></linearGradient>
        <linearGradient id="coral"><stop stopColor="#a56560" /><stop offset="0.500" stopColor="#ad6a54" /><stop offset="1" stopColor="#bd7049" /></linearGradient>
        <linearGradient id="pane" x2="0" y2="1"><stop stopColor="#8a8a8a" /><stop offset="1" stopColor="#c4c4c4" /></linearGradient>
      </defs>
      <path d="M0 0h3584v130H0z" fill="#4a1e0e" />
      <path d="M0 60h620v70H0z" fill="url(#wood)" />
      <path d="M600 100h1640l-30 30H570z" fill="url(#coral)" />
      <path d="M2220 118h110v12h-120z" fill="#6d4127" />
      <path d="M2310 118h430v12h-420z" fill="#18221f" />
      <path d="M2394 118h16l12 12h-16zM2514 118h18l10 12h-18zM2592 118h10l4 12h-12zM2650 118h10l-6 12h-8z" fill="#5c8a34" />
      <path d="M2410 118h36l6 12h-32zM2700 118h42l-8 12h-36z" fill="#74462a" />
      <path d="M2842 118h124l12 12h-124zM3330 118h94l16 12h-98z" fill="#c8693a" />
      <path d="M3424 118h24l16 12h-22z" fill="#53426a" />
      <path d="M0 0h3584v80H24C8 80 0 66 0 56z" fill="url(#pane)" />
      <path d="M56 0h106v60H56z" fill="#1a1a22" />
      <path d="M82 0h54v40H82z" fill="#56358a" />
      <path d="M108 0h28v40h-28z" fill="#2f6686" />
      <path d="M162 0h320v60H162z" fill="#8b8b8b" />
    </svg>
  );
}

function Dock() {
  return (
    <footer className="relative h-[108px] shrink-0 px-[54px] pt-2">
      <span className="absolute -top-5 left-[188px] text-[26px] leading-6 font-bold text-[#2d2d2d]">Collaborative Inh...</span>
      <div className="relative flex h-[90px] items-stretch rounded-[26px] border border-white/30 bg-linear-to-r from-[#918a83] via-[#d2b4aa] via-40% to-[#bfa6a0] px-1.5 shadow-md">
        <div className="absolute inset-0 rounded-[26px] bg-[radial-gradient(ellipse_at_68%_60%,#a2a396_0%,transparent_9%),radial-gradient(ellipse_at_78%_70%,#d9a28c_0%,transparent_8%)]" />
        <nav className="relative flex flex-1 pb-1.5">
          {APPS.map((a) => <DockItem key={a.name} app={a} />)}
          <span className="mx-[15px] my-3 w-0.5 bg-[#8c7b77]" />
          {STACKS.map((a) => <DockItem key={a.name} app={a} />)}
        </nav>
      </div>
    </footer>
  );
}

export default function App() {
  return (
    <div className="relative flex h-screen flex-col overflow-hidden bg-[#436fae] font-[Inter,sans-serif]">
      <Desktop />
      <MenuBar />
      <Browser />
      <Dock />
    </div>
  );
}
